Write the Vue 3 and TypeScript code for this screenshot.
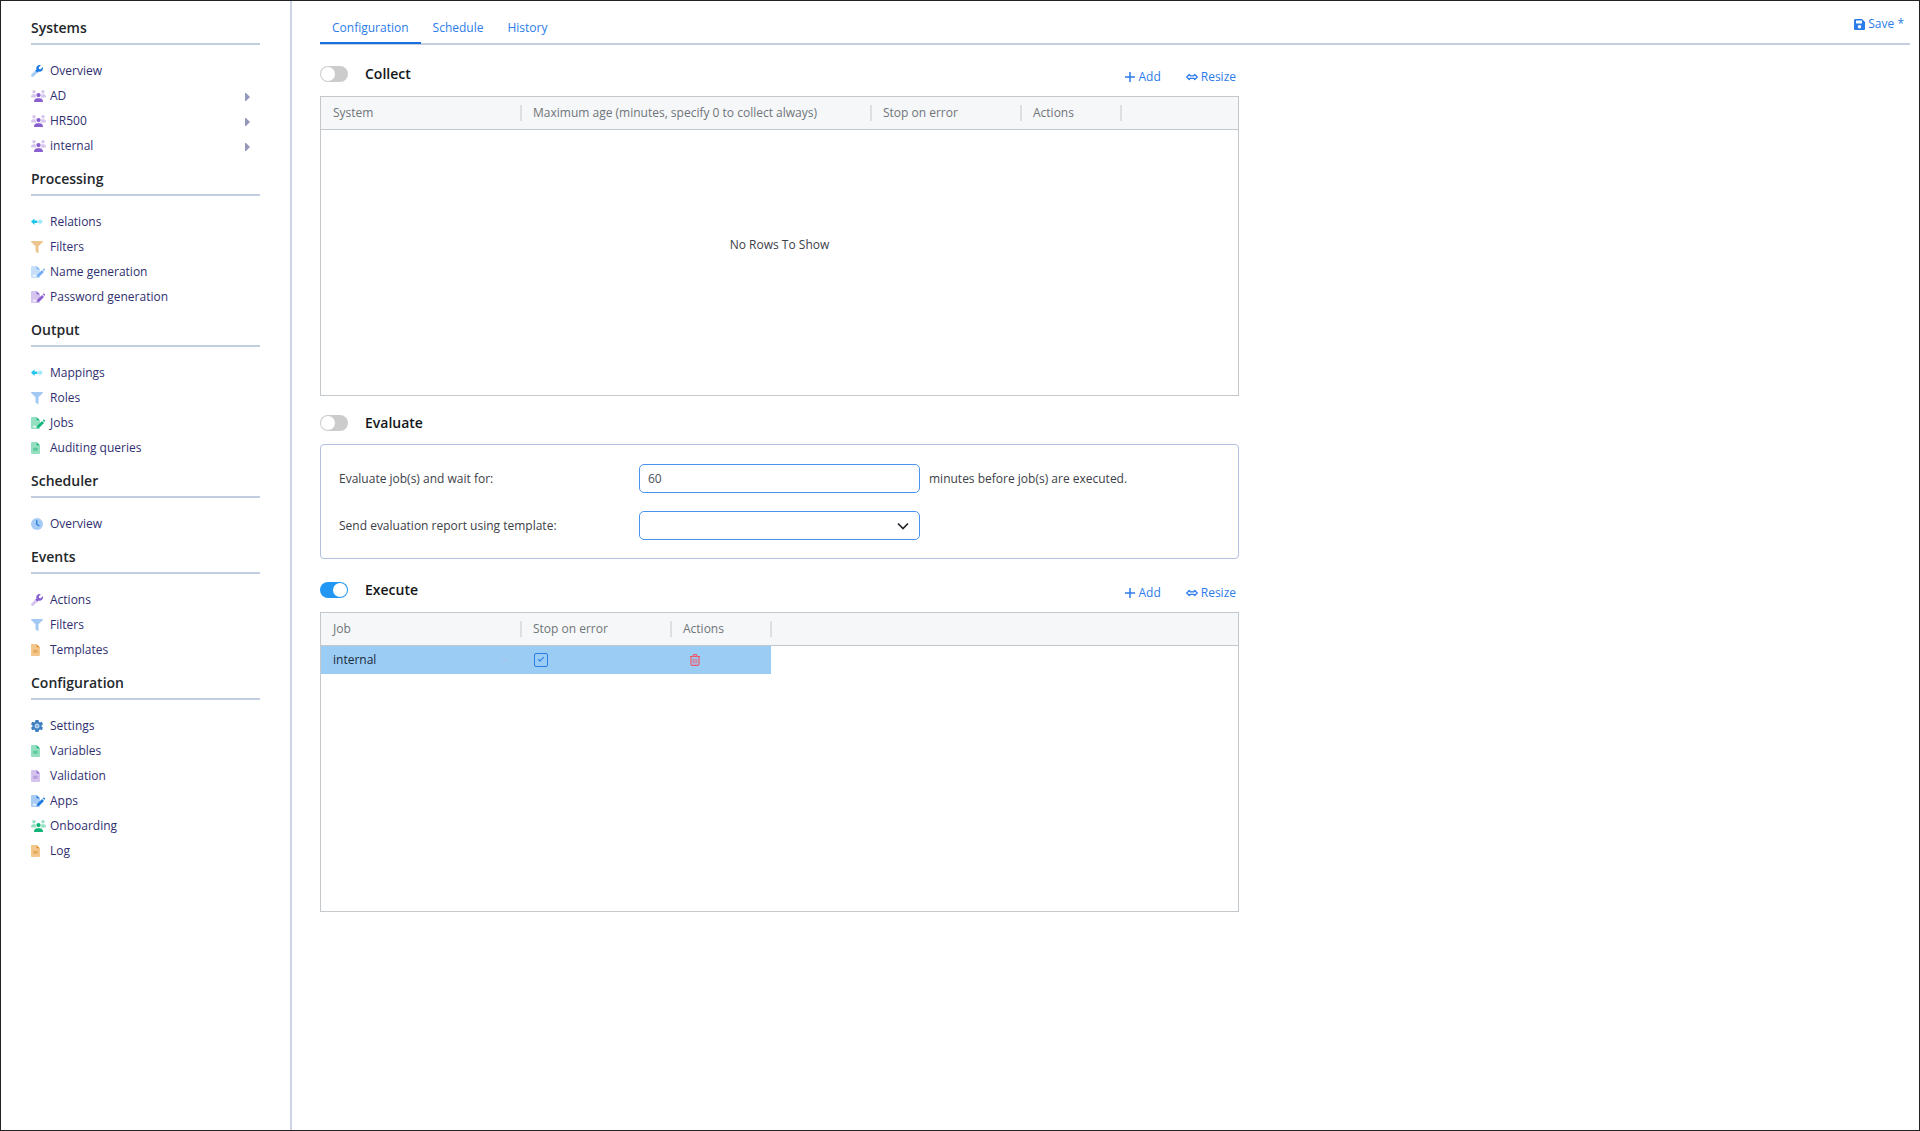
<script setup lang="ts">
import { ref } from 'vue'

interface Item {
  label: string
  icon: 'wrench' | 'users' | 'arrows' | 'filter' | 'pen' | 'file' | 'clock' | 'gear'
  tone: string
  expandable?: boolean
}

interface Section {
  title: string
  items: Item[]
}

const sections: Section[] = [
  {
    title: 'Systems',
    items: [
      { label: 'Overview', icon: 'wrench', tone: 'blue' },
      { label: 'AD', icon: 'users', tone: 'purple', expandable: true },
      { label: 'HR500', icon: 'users', tone: 'purple', expandable: true },
      { label: 'internal', icon: 'users', tone: 'purple', expandable: true },
    ],
  },
  {
    title: 'Processing',
    items: [
      { label: 'Relations', icon: 'arrows', tone: 'cyan' },
      { label: 'Filters', icon: 'filter', tone: 'orange' },
      { label: 'Name generation', icon: 'pen', tone: 'sky' },
      { label: 'Password generation', icon: 'pen', tone: 'purple' },
    ],
  },
  {
    title: 'Output',
    items: [
      { label: 'Mappings', icon: 'arrows', tone: 'cyan' },
      { label: 'Roles', icon: 'filter', tone: 'blue' },
      { label: 'Jobs', icon: 'pen', tone: 'green' },
      { label: 'Auditing queries', icon: 'file', tone: 'green' },
    ],
  },
  { title: 'Scheduler', items: [{ label: 'Overview', icon: 'clock', tone: 'blue' }] },
  {
    title: 'Events',
    items: [
      { label: 'Actions', icon: 'wrench', tone: 'purple' },
      { label: 'Filters', icon: 'filter', tone: 'blue' },
      { label: 'Templates', icon: 'file', tone: 'orange' },
    ],
  },
  {
    title: 'Configuration',
    items: [
      { label: 'Settings', icon: 'gear', tone: 'steel' },
      { label: 'Variables', icon: 'file', tone: 'green' },
      { label: 'Validation', icon: 'file', tone: 'purple' },
      { label: 'Apps', icon: 'pen', tone: 'blue' },
      { label: 'Onboarding', icon: 'users', tone: 'green' },
      { label: 'Log', icon: 'file', tone: 'orange' },
    ],
  },
]

const tabs = ['Configuration', 'Schedule', 'History']
const activeTab = ref('Configuration')

const collect = ref(false)
const evaluate = ref(false)
const execute = ref(true)
const waitMinutes = ref('60')
const template = ref('')
const jobs = ref([{ name: 'internal', stopOnError: true }])
</script>

<template>
  <div class="page">
    <nav class="sidebar">
      <section v-for="section in sections" :key="section.title" class="group">
        <h2>{{ section.title }}</h2>
        <ul>
          <li v-for="item in section.items" :key="item.label">
            <a href="#" :class="['link', item.tone]">
              <svg v-if="item.icon === 'wrench'" class="icon" width="12" height="12" viewBox="0 0 512 512">
                <path class="light" d="M192 229L19 403c-25 25-25 65 0 90s65 25 90 0l174-173z" />
                <path class="dark" d="M508 109c-2-9-14-12-20-6l-75 75-68-11-11-68 74-75c7-6 4-18-5-20-48-12-100 1-137 38-40 40-50 97-34 147l-50 50 91 91 50-50c50 17 107 6 147-34 37-37 50-89 38-137z" />
              </svg>
              <svg v-else-if="item.icon === 'users'" class="icon" width="15" height="12" viewBox="0 0 640 512">
                <circle class="light" cx="128" cy="72" r="72" />
                <circle class="light" cx="512" cy="72" r="72" />
                <path class="light" d="M0 290c0-65 45-110 105-110h50c20 0 38 5 50 12-14 60 2 100 35 128H20c-12 0-20-10-20-30zM640 290c0-65-45-110-105-110h-50c-20 0-38 5-50 12 14 60-2 100-35 128h220c12 0 20-10 20-30z" />
                <circle class="dark" cx="320" cy="216" r="92" />
                <path class="dark" d="M128 486c0-76 58-134 134-134h116c76 0 134 58 134 134 0 16-10 26-26 26H154c-16 0-26-10-26-26z" />
              </svg>
              <svg v-else-if="item.icon === 'arrows'" class="icon" width="12" height="12" viewBox="0 0 24 24">
                <path class="dark" d="M0 11L7 5v4h5v5H7v4z" />
                <path class="light" d="M24 11L17 5v4h-5v5h5v4z" />
              </svg>
              <svg v-else-if="item.icon === 'filter'" class="icon" width="12" height="12" viewBox="0 0 512 512">
                <path class="solid" d="M488 0H24C3 0-8 26 7 41l185 185v206c0 8 4 15 10 20l80 56c16 11 38-1 38-20V226L505 41C520 26 509 0 488 0z" />
              </svg>
              <svg v-else-if="item.icon === 'pen'" class="icon" width="14" height="12" viewBox="0 0 28 24">
                <path class="light" d="M0 2.500C0 1 1 0 2.500 0H11v7h7v6l-6 6v3h6c0 1.500-1 2-2.500 2h-13C1 24 0 23 0 21.500z" />
                <path class="dark" d="M11 0l7 7h-7z" />
                <path class="paper" d="M3 21l3-5 2 3 2-2 1 4z" />
                <path class="dark" d="M12.500 17.500L22 8l4 4-9.500 9.500-5 1zM23.500 6.500l1.500-1.500c1-1 4 2 3 3L26.500 10z" />
              </svg>
              <svg v-else-if="item.icon === 'file'" class="icon" width="9" height="12" viewBox="0 0 18 24">
                <path class="light" d="M0 2.500C0 1 1 0 2.500 0H11v7h7v14.500c0 1.500-1 2.500-2.500 2.500h-13C1 24 0 23 0 21.500z" />
                <path class="dark" d="M11 0l7 7h-7z" />
                <path class="mid" d="M4.500 11.500h9v6h-9z" />
              </svg>
              <svg v-else-if="item.icon === 'clock'" class="icon" width="12" height="12" viewBox="0 0 24 24">
                <circle class="light" cx="12" cy="12" r="12" />
                <path d="M11.500 5v7.500l4.500 3" fill="none" stroke="#1f7ae0" stroke-width="2.500" stroke-linecap="round" />
              </svg>
              <svg v-else class="icon" width="12" height="12" viewBox="0 0 24 24">
                <path class="dark" d="M9 0h6l1 4 2 1 3.500-1.500 2.500 5-3 2.500v2l3 2.500-2.500 5L18 19l-2 1-1 4H9l-1-4-2-1-3.500 1.500-2.500-5L3 13v-2L0 8.500l2.500-5L6 5l2-1z" />
                <circle class="light" cx="12" cy="12" r="5" />
                <circle class="mid" cx="12" cy="12" r="2" />
              </svg>
              <span>{{ item.label }}</span>
            </a>
            <button v-if="item.expandable" type="button" class="caret" :aria-label="`Expand ${item.label}`">
              <svg width="5" height="8" viewBox="0 0 5 8"><path d="M0 0h1l4 4-4 4H0z" fill="#9498ba" /></svg>
            </button>
          </li>
        </ul>
      </section>
    </nav>

    <main class="main">
      <header class="topbar">
        <div class="tabs" role="tablist">
          <button
            v-for="tab in tabs"
            :key="tab"
            type="button"
            role="tab"
            :aria-selected="activeTab === tab"
            :class="['tab', { active: activeTab === tab }]"
            @click="activeTab = tab"
          >
            {{ tab }}
          </button>
        </div>
        <button type="button" class="action save">
          <svg width="11" height="11" viewBox="0 0 22 22">
            <path fill="currentColor" fill-rule="evenodd" d="M3 0h13l6 6v13c0 2-1 3-3 3H3c-2 0-3-1-3-3V3c0-2 1-3 3-3zm1 3v6h12V3zm7 9a3.500 3.500 0 100 7 3.500 3.500 0 000-7z" />
          </svg>
          <span>Save *</span>
        </button>
      </header>

      <div class="content">
        <section>
          <div class="bar with-actions">
            <label class="switch-label"><input v-model="collect" type="checkbox" class="switch" /><span>Collect</span></label>
            <div class="actions">
              <button type="button" class="action">
                <svg width="10" height="10" viewBox="0 0 20 20"><path d="M10 0v20M0 10h20" stroke="currentColor" stroke-width="3" /></svg>
                <span>Add</span>
              </button>
              <button type="button" class="action">
                <svg width="12" height="8" viewBox="0 0 24 16"><path d="M1.500 8l5-5 2 2.500h7l2-2.500 5 5-5 5-2-2.500h-7l-2 2.500z" fill="none" stroke="currentColor" stroke-width="2.500" stroke-linejoin="round" /></svg>
                <span>Resize</span>
              </button>
            </div>
          </div>
          <div class="grid">
            <table>
              <colgroup><col class="c200" /><col class="c350" /><col class="c150" /><col class="c100" /><col /></colgroup>
              <thead>
                <tr>
                  <th>System</th>
                  <th>Maximum age (minutes, specify 0 to collect always)</th>
                  <th>Stop on error</th>
                  <th>Actions</th>
                  <td class="filler"></td>
                </tr>
              </thead>
              <tbody>
                <tr><td colspan="5" class="empty">No Rows To Show</td></tr>
              </tbody>
            </table>
          </div>
        </section>

        <section>
          <div class="bar">
            <label class="switch-label"><input v-model="evaluate" type="checkbox" class="switch" /><span>Evaluate</span></label>
          </div>
          <div class="panel">
            <label for="wait">Evaluate job(s) and wait for:</label>
            <input id="wait" v-model="waitMinutes" type="text" class="field" />
            <span>minutes before job(s) are executed.</span>
            <label for="template">Send evaluation report using template:</label>
            <div class="select">
              <select id="template" v-model="template" class="field"><option value=""></option></select>
              <svg class="chevron" width="12" height="8" viewBox="0 0 12 8"><path d="M1 1.500l5 5 5-5" fill="none" stroke="#212529" stroke-width="1.700" /></svg>
            </div>
          </div>
        </section>

        <section>
          <div class="bar with-actions">
            <label class="switch-label"><input v-model="execute" type="checkbox" class="switch" /><span>Execute</span></label>
            <div class="actions">
              <button type="button" class="action">
                <svg width="10" height="10" viewBox="0 0 20 20"><path d="M10 0v20M0 10h20" stroke="currentColor" stroke-width="3" /></svg>
                <span>Add</span>
              </button>
              <button type="button" class="action">
                <svg width="12" height="8" viewBox="0 0 24 16"><path d="M1.500 8l5-5 2 2.500h7l2-2.500 5 5-5 5-2-2.500h-7l-2 2.500z" fill="none" stroke="currentColor" stroke-width="2.500" stroke-linejoin="round" /></svg>
                <span>Resize</span>
              </button>
            </div>
          </div>
          <div class="grid">
            <table>
              <colgroup><col class="c200" /><col class="c150" /><col class="c100" /><col /></colgroup>
              <thead>
                <tr>
                  <th>Job</th>
                  <th>Stop on error</th>
                  <th>Actions</th>
                  <td class="filler"></td>
                </tr>
              </thead>
              <tbody>
                <tr v-for="job in jobs" :key="job.name" class="selected">
                  <td>
                    <div class="job">
                      <span>{{ job.name }}</span>
                      <svg width="8" height="5" viewBox="0 0 8 5"><path d="M0 0l4 4 4-4" fill="none" stroke="#a9c0de" /></svg>
                    </div>
                  </td>
                  <td><input v-model="job.stopOnError" type="checkbox" class="check" aria-label="Stop on error" /></td>
                  <td>
                    <button type="button" class="trash" aria-label="Delete job">
                      <svg width="10" height="12" viewBox="0 0 20 24" fill="none" stroke="#f0566a" stroke-width="2.400">
                        <path d="M0 5h20M6 4l1.500-2.800h5L14 4M2 5v15c0 2 1 2.800 3 2.800h10c2 0 3-.8 3-2.800V5" />
                        <path d="M6.500 9v10M10 9v10M13.500 9v10" stroke-width="1.600" />
                      </svg>
                    </button>
                  </td>
                  <td class="filler"></td>
                </tr>
              </tbody>
            </table>
          </div>
        </section>
      </div>
    </main>
  </div>
</template>

<style>
body {
  margin: 0;
}
</style>

<style scoped>
.page {
  box-sizing: border-box;
  display: flex;
  min-height: 100vh;
  border: 1px solid #222;
  background: #fff;
  color: #3c4148;
  font: 12px/18px "Open Sans", "Noto Sans", sans-serif;
}

button,
input,
select {
  font: inherit;
}

button {
  padding: 0;
  border: 0;
  background: none;
  cursor: pointer;
}

svg {
  display: block;
  flex: none;
}

/* Sidebar */
.sidebar {
  box-sizing: border-box;
  flex: 0 0 291px;
  padding: 12px 30px;
  border-right: 2px solid #cbd3e4;
}

.group {
  margin-bottom: 6px;
}

h2 {
  margin: 0 0 13px;
  border-bottom: 2px solid #c3cde0;
  color: #23272b;
  font-size: 14px;
  line-height: 30px;
  font-weight: 600;
}

ul {
  margin: 0;
  padding: 0;
  list-style: none;
}

li {
  display: flex;
  align-items: center;
  justify-content: space-between;
  height: 25px;
  padding-right: 10px;
}

.link {
  display: grid;
  grid-template-columns: 19px auto;
  align-items: center;
  color: #2f2f70;
  text-decoration: none;
}

.caret {
  padding: 3px 0 0;
}

.dark { fill: var(--dark); }
.light { fill: var(--light); }
.mid { fill: var(--mid); }
.solid { fill: var(--solid); }
.paper { fill: #fff; opacity: 0.8; }

.blue { --dark: #1f7ae0; --light: #a6ccf6; --mid: #72a9e8; --solid: #a3c8f3; }
.sky { --dark: #74aef5; --light: #c5dffb; --mid: #9cc5f5; --solid: #a3c8f3; }
.purple { --dark: #8a5fd0; --light: #d5c5ee; --mid: #b99ee0; --solid: #d5c5ee; }
.cyan { --dark: #1fc4ee; --light: #a2e8fa; --mid: #60d5f2; --solid: #a2e8fa; }
.orange { --dark: #e08a1e; --light: #f2c68c; --mid: #e6a95c; --solid: #edc58f; }
.green { --dark: #10b378; --light: #93dfc0; --mid: #5cc9a0; --solid: #93dfc0; }
.steel { --dark: #3f7fc0; --light: #b5d2ee; --mid: #7aa9d8; --solid: #b5d2ee; }

/* Main area */
.main {
  flex: 1;
  min-width: 0;
  padding: 12px 9px 12px 28px;
}

.topbar {
  display: flex;
  justify-content: space-between;
  align-items: flex-start;
  border-bottom: 2px solid #c5cde0;
}

.tabs {
  display: flex;
  margin-bottom: -1px;
}

.tab {
  padding: 0 12px;
  border-bottom: 2px solid transparent;
  color: #2b7ce9;
  line-height: 29px;
}

.tab.active {
  border-color: #1a6fdc;
}

.action {
  display: flex;
  align-items: center;
  gap: 3px;
  color: #2b7ce9;
  line-height: 22px;
}

.save {
  margin-right: 6px;
}

.content {
  max-width: 919px;
}

.bar {
  display: flex;
  align-items: center;
  justify-content: space-between;
  height: 42px;
  margin-top: 6px;
}

.bar.with-actions {
  height: 44px;
  margin-top: 7px;
}

.switch-label {
  display: flex;
  align-items: center;
  gap: 17px;
  color: #14171a;
  font-size: 14px;
  line-height: 22px;
  font-weight: 600;
}

.switch {
  appearance: none;
  width: 28px;
  height: 16px;
  margin: 0;
  padding: 1px;
  box-sizing: border-box;
  border-radius: 8px;
  background: #ccc;
}

.switch::before {
  content: "";
  display: block;
  width: 14px;
  height: 14px;
  border-radius: 50%;
  background: #fff;
}

.switch:checked {
  background: #2196f3;
}

.switch:checked::before {
  margin-left: auto;
}

.actions {
  display: flex;
  gap: 25px;
  padding: 6px 3px 0 0;
}

.grid {
  box-sizing: border-box;
  min-height: 300px;
  border: 1px solid #c3c8cd;
}

table {
  width: 100%;
  border-collapse: collapse;
  table-layout: fixed;
}

.c100 { width: 100px; }
.c150 { width: 150px; }
.c200 { width: 200px; }
.c350 { width: 350px; }

thead tr {
  height: 32px;
  border-bottom: 1px solid #c3c8cd;
  background: #f5f7f8;
}

th {
  position: relative;
  padding: 0 12px;
  color: #70757a;
  font-weight: 500;
  text-align: left;
  white-space: nowrap;
}

th::after {
  content: "";
  position: absolute;
  top: 8px;
  right: -1px;
  width: 2px;
  height: 16px;
  background: #dddfe3;
}

tbody td {
  height: 28px;
  padding: 0 12px;
}

tbody .empty {
  height: 230px;
  text-align: center;
}

.selected td:not(.filler) {
  background: #9accf4;
  color: #1c2a3a;
}

.job {
  display: flex;
  align-items: center;
  justify-content: space-between;
}

.check {
  appearance: none;
  display: block;
  box-sizing: border-box;
  width: 14px;
  height: 14px;
  margin: 0 0 0 1px;
  border: 1px solid #2b7ce9;
  border-radius: 2px;
}

.check:checked::before {
  content: "";
  display: block;
  width: 5px;
  height: 2px;
  margin: 3px 0 0 3px;
  border: solid #2b7ce9;
  border-width: 0 0 1px 1px;
  transform: rotate(-45deg);
}

.trash {
  display: block;
  margin-left: 7px;
}

.panel {
  display: grid;
  grid-template-columns: 291px 281px 1fr;
  align-items: center;
  gap: 18px 9px;
  box-sizing: border-box;
  margin-bottom: 9px;
  padding: 19px 18px 18px;
  border: 1px solid #b3bfdf;
  border-radius: 4px;
}

.field {
  box-sizing: border-box;
  width: 100%;
  height: 29px;
  padding: 0 8px;
  border: 1px solid #4a93ef;
  border-radius: 5px;
  background: #fff;
  color: #495057;
}

.select {
  position: relative;
}

.select .field {
  display: block;
  appearance: none;
}

.chevron {
  position: absolute;
  top: 11px;
  right: 11px;
  pointer-events: none;
}
</style>
